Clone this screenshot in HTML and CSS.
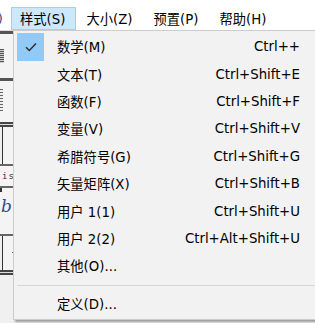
FILE: index.html
```html
<!DOCTYPE html>
<html lang="zh-CN">
  <head>
    <meta charset="UTF-8" />
    <title>样式菜单</title>
    <link rel="stylesheet" href="styles.css">
  </head>
  <body>
    <div class="window">
      <div class="top-gap"></div>

      <!-- Menu Bar -->
      <div class="menubar">
        <span class="menubar-edge">)</span>
        <span class="menubar-item active">样式(S)</span>
        <span class="menubar-item">大小(Z)</span>
        <span class="menubar-item">预置(P)</span>
        <span class="menubar-item">帮助(H)</span>
      </div>

      <!-- Toolbar strip behind the menu -->
      <div class="workspace">
        <div class="strip">
          <div class="bar"></div>
          <div class="cell cell-a"><span class="dots"></span></div>
          <div class="bar"></div>
          <div class="cell cell-b"><span class="dots tall"></span></div>
          <div class="bar double"></div>
          <div class="cell cell-box"></div>
          <div class="bar thin"></div>
          <div class="cell cell-text">is</div>
          <div class="bar thin"></div>
          <div class="cell cell-b-ital"><span class="tick"></span><span class="ital">b</span></div>
          <div class="bar thin"></div>
          <div class="cell cell-box2"><span class="mark"></span></div>
          <div class="bar double"></div>
        </div>
      </div>

      <!-- Dropdown -->
      <div class="dropdown">
        <div class="menu-row">
          <span class="check">
            <svg width="12" height="10" viewBox="0 0 12 10">
              <path d="M1 5.2 L4.3 8.4 L11 1.6" fill="none" stroke="#2b2b2b" stroke-width="1.4" />
            </svg>
          </span>
          <span class="label">数学(M)</span>
          <span class="key">Ctrl++</span>
        </div>
        <div class="menu-row">
          <span class="check"></span>
          <span class="label">文本(T)</span>
          <span class="key">Ctrl+Shift+E</span>
        </div>
        <div class="menu-row">
          <span class="check"></span>
          <span class="label">函数(F)</span>
          <span class="key">Ctrl+Shift+F</span>
        </div>
        <div class="menu-row">
          <span class="check"></span>
          <span class="label">变量(V)</span>
          <span class="key">Ctrl+Shift+V</span>
        </div>
        <div class="menu-row">
          <span class="check"></span>
          <span class="label">希腊符号(G)</span>
          <span class="key">Ctrl+Shift+G</span>
        </div>
        <div class="menu-row">
          <span class="check"></span>
          <span class="label">矢量矩阵(X)</span>
          <span class="key">Ctrl+Shift+B</span>
        </div>
        <div class="menu-row">
          <span class="check"></span>
          <span class="label">用户 1(1)</span>
          <span class="key">Ctrl+Shift+U</span>
        </div>
        <div class="menu-row">
          <span class="check"></span>
          <span class="label">用户 2(2)</span>
          <span class="key">Ctrl+Alt+Shift+U</span>
        </div>
        <div class="menu-row">
          <span class="check"></span>
          <span class="label">其他(O)...</span>
          <span class="key"></span>
        </div>
        <div class="separator"></div>
        <div class="menu-row">
          <span class="check"></span>
          <span class="label">定义(D)...</span>
          <span class="key"></span>
        </div>
      </div>
    </div>
  </body>
</html>
```

FILE: styles.css
```css
/* Global Styles */
body {
  margin: 0;
  padding: 0;
  background-color: #fff;
  font-family: "DejaVu Sans", "Noto Sans CJK SC", sans-serif;
  font-size: 13.3px;
  color: #000;
}

.window {
  position: relative;
  width: 315px;
  height: 323px;
  overflow: hidden;
}

.top-gap {
  height: 7px;
}

/* Menu Bar */
.menubar {
  display: flex;
  align-items: stretch;
  height: 23px;
  border-bottom: 1px solid #dadada;
  background-color: #fff;
}

.menubar-edge {
  display: flex;
  align-items: center;
  width: 13px;
  margin-left: -2px;
  color: #1f3b8a;
  font-size: 12px;
}

.menubar-item {
  display: flex;
  align-items: center;
  padding: 0 10px 0 8px;
  margin-right: 1px;
  border: 1px solid transparent;
}

.menubar-item.active {
  background-color: #cce8ff;
  border-color: #99d1ff;
}

/* Workspace strip */
.workspace {
  height: 292px;
  background-color: #f0f0f0;
}

.strip {
  width: 13px;
  display: flex;
  flex-direction: column;
}

.bar {
  height: 3px;
  background-color: #555;
}

.bar.thin {
  height: 2px;
  background-color: #666;
}

.bar.double {
  height: 5px;
  background: linear-gradient(#444 0 2px, #ddd 2px 3px, #444 3px 5px);
}

.cell {
  position: relative;
  background-color: #f4f4f4;
}

.cell-a { height: 44px; }
.cell-b { height: 41px; }
.cell-box {
  height: 37px;
  border-left: 1px solid #333;
  margin-left: 2px;
}
.cell-text {
  height: 20px;
  font-family: "DejaVu Sans Mono", monospace;
  font-size: 9px;
  line-height: 20px;
  color: #333;
  letter-spacing: 1px;
  padding-left: 2px;
}
.cell-b-ital {
  height: 46px;
}
.cell-box2 {
  height: 34px;
  border-left: 1px solid #333;
  margin-left: 2px;
}

.dots {
  position: absolute;
  left: 0;
  top: 15px;
  width: 4px;
  height: 14px;
  background: repeating-linear-gradient(#555 0 1px, #ccc 1px 2px);
}

.dots.tall {
  top: 8px;
  height: 22px;
  width: 3px;
  background: repeating-linear-gradient(#666 0 1px, #eee 1px 3px);
}

.tick {
  position: absolute;
  left: 0;
  top: 0;
  width: 2px;
  height: 4px;
  background-color: #333;
}

.ital {
  position: absolute;
  left: 1px;
  top: 8px;
  font-family: "DejaVu Serif", serif;
  font-style: italic;
  font-size: 17px;
  color: #2e4f8a;
}

.mark {
  position: absolute;
  left: 9px;
  top: 16px;
  width: 2px;
  height: 1px;
  background-color: #a0522d;
}

/* Dropdown menu */
.dropdown {
  position: absolute;
  left: 13px;
  top: 30px;
  width: 320px;
  height: 286px;
  padding: 2px 0 0 3px;
  background-color: #f2f2f2;
  border: 1px solid #cccccc;
  box-shadow: 2px 2px 2px rgba(0, 0, 0, 0.35);
}

.menu-row {
  display: flex;
  align-items: center;
  height: 27.4px;
  font-size: 13.3px;
}

.check {
  display: flex;
  align-items: center;
  justify-content: center;
  width: 27px;
  height: 28px;
  flex-shrink: 0;
}

.menu-row:first-child .check {
  background-color: #91c9f7;
}

.label {
  flex: 1;
  padding-left: 13px;
}

.key {
  width: 150px;
  margin-right: 37px;
  text-align: right;
}

.separator {
  height: 1px;
  margin: 5px 0 4px 0;
  background-color: #d7d7d7;
}
```
